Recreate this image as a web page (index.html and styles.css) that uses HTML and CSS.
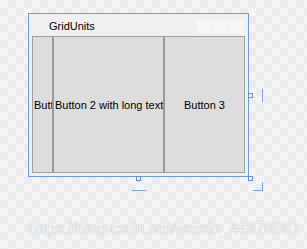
FILE: index.html
```html
<!DOCTYPE html>
<html lang="en">
<head>
    <meta charset="UTF-8">
    <title>GridUnits</title>
    <link rel="stylesheet" href="styles.css">
</head>
<body>
    <div class="stage">
        <div class="window">
            <div class="title-bar">
                <span class="title">GridUnits</span>
                <div class="caption-buttons">
                    <span></span><span></span><span></span>
                </div>
            </div>
            <div class="grid">
                <div class="cell col-1"><span>Button 1</span></div>
                <div class="splitter"></div>
                <div class="cell col-2"><span>Button 2 with long text</span></div>
                <div class="splitter"></div>
                <div class="cell col-3"><span>Button 3</span></div>
            </div>
        </div>

        <!-- designer adorners -->
        <div class="handle handle-right"></div>
        <div class="handle handle-bottom"></div>
        <div class="handle handle-corner"></div>
        <div class="rail rail-right"></div>
        <div class="rail rail-bottom"></div>
        <div class="corner-mark"></div>

        <div class="watermark">https://blog.csdn.net/weixin_44870681</div>
    </div>
</body>
</html>
```

FILE: styles.css
```css
body {
    margin: 0;
    padding: 0;
    font-family: "Liberation Sans", Arial, sans-serif;
}

.stage {
    position: relative;
    width: 307px;
    height: 249px;
    box-sizing: border-box;
    padding: 13px 0 0 28px;
    overflow: hidden;
    background-color: #f5f5f5;
    background-image: conic-gradient(#ececec 25%, transparent 0 50%, #ececec 0 75%, transparent 0);
    background-size: 16px 16px;
}

.window {
    width: 221px;
    height: 164px;
    box-sizing: border-box;
    border: 1px solid #6a9ceb;
    background-color: #f0f0f0;
    padding: 0 3px 3px 3px;
    display: flex;
    flex-direction: column;
}

.title-bar {
    height: 22px;
    display: flex;
    align-items: flex-start;
    justify-content: space-between;
}

.title {
    padding: 5px 0 0 17px;
    font-size: 11px;
    line-height: 14px;
    color: #000;
}

.caption-buttons {
    display: flex;
    gap: 1px;
    margin: 5px 1px 0 0;
}

.caption-buttons span {
    width: 15px;
    height: 15px;
    background-color: #f6f6f6;
}

.grid {
    flex: 1;
    display: flex;
    border: 1px solid #a0a0a0;
    background-color: #dddddd;
}

.cell {
    overflow: hidden;
    display: flex;
    align-items: center;
    font-size: 11px;
    line-height: 14px;
    color: #000;
}

.cell span {
    white-space: nowrap;
    flex-shrink: 0;
}

.col-1 {
    width: 19px;
    padding-left: 1px;
    box-sizing: border-box;
}

.col-2 {
    width: 109px;
    padding-left: 1px;
    box-sizing: border-box;
}

.col-3 {
    width: 79px;
    justify-content: center;
}

.splitter {
    width: 2px;
    background-color: #999999;
}

.handle {
    position: absolute;
    width: 3px;
    height: 3px;
    border: 1px solid #5b8ff0;
    background-color: #f5f5f5;
}

.handle-right {
    left: 248px;
    top: 93px;
}

.handle-bottom {
    left: 136px;
    top: 176px;
}

.handle-corner {
    left: 248px;
    top: 176px;
}

.rail {
    position: absolute;
    background-color: #7aa6ee;
}

.rail-right {
    left: 262px;
    top: 89px;
    width: 1px;
    height: 13px;
}

.rail-bottom {
    left: 132px;
    top: 190px;
    width: 14px;
    height: 1px;
}

.corner-mark {
    position: absolute;
    left: 253px;
    top: 182px;
    width: 9px;
    height: 8px;
    border-right: 1px solid #7aa6ee;
    border-bottom: 1px solid #7aa6ee;
}

.watermark {
    position: absolute;
    left: 28px;
    top: 220px;
    font-size: 16px;
    color: rgba(255, 255, 255, 0.9);
    text-shadow: 0 0 1px rgba(0, 0, 0, 0.35);
    white-space: nowrap;
}
```
